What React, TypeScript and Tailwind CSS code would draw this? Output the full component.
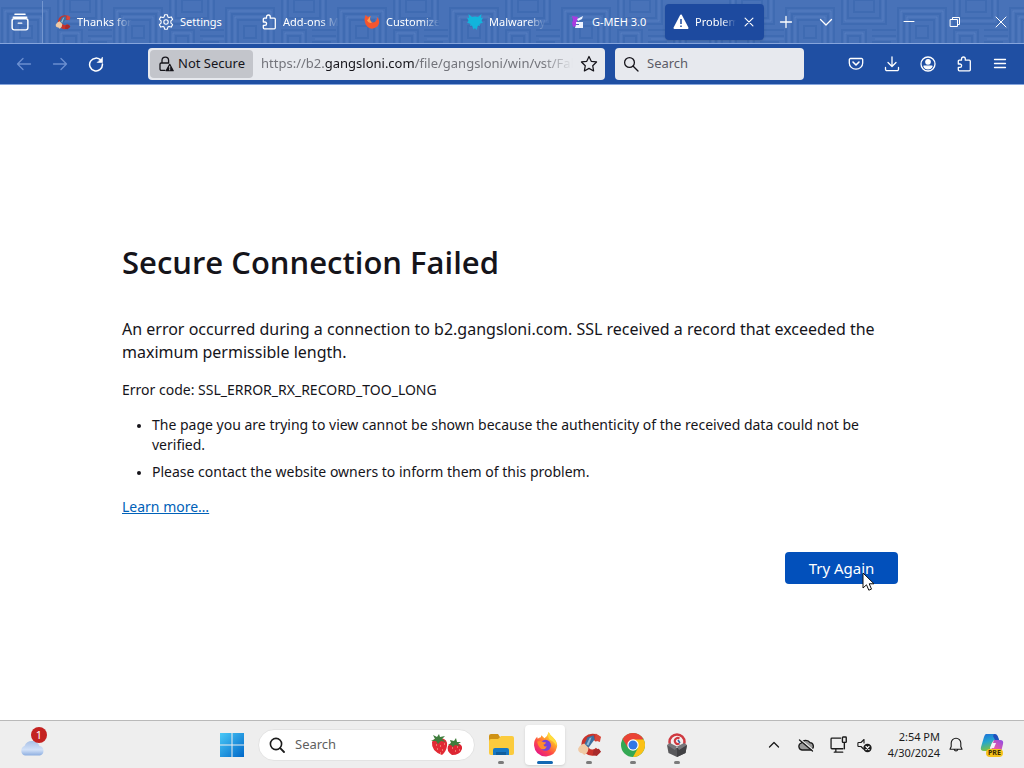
import { type ReactNode } from 'react';

interface IconProps {
    className?: string;
    size?: number;
    children: ReactNode;
}

// 16x16 line icon used all over the browser chrome
function LineIcon({ className = '', size = 16, children }: IconProps) {
    return (
        <svg
            className={`shrink-0 ${className}`}
            width={size}
            height={size}
            viewBox="0 0 16 16"
            fill="none"
            stroke="currentColor"
            strokeWidth="1.3"
            strokeLinecap="round"
            strokeLinejoin="round"
            aria-hidden="true"
        >
            {children}
        </svg>
    );
}

function PuzzleIcon() {
    return (
        <LineIcon>
            <path d="M5.5 4.2V2.900a1.900 1.900 0 0 1 3.800 0V4.200h4a1 1 0 0 1 1 1v8.600a1 1 0 0 1-1 1H3.300a1 1 0 0 1-1-1v-2.400h1.600a1.700 1.700 0 0 0 0-3.400H2.300V5.200a1 1 0 0 1 1-1z" />
        </LineIcon>
    );
}

function GearIcon() {
    return (
        <LineIcon>
            <circle cx="8" cy="8" r="2.2" strokeWidth="1.1" />
            <path
                d="M6.600.8h2.800l.5 2.200 1.100.6 2.200-.7 1.400 2.400-1.700 1.600v2.200l1.700 1.600-1.400 2.400-2.200-.7-1.100.6-.5 2.200H6.600l-.5-2.200-1.100-.6-2.200.7-1.400-2.400 1.700-1.600V6.900L1.400 5.300l1.400-2.400 2.200.7L6.100 3z"
                strokeWidth="1.1"
            />
        </LineIcon>
    );
}

function CCleanerIcon({ size = 16 }: { size?: number }) {
    return (
        <svg className="shrink-0" width={size} height={size} viewBox="0 0 24 24" aria-hidden="true">
            <path d="M20.500 7.500A7.500 7.500 0 1 0 20.500 17" fill="none" stroke="#c8332b" strokeWidth="6" />
            <path d="M18 1.500l5 3-1 5-5-1.500z" fill="#d8473a" />
            <path d="M10 5l6-2 1 4-6 8-4-3z" fill="#3d6f9e" />
            <path d="M12 6l2-1-3 8-2-1z" fill="#8db8d8" />
            <path d="M1 16q2-4 6-5l4 4q0 5-4 7-2-2-4-2-2-1-2-4z" fill="#f0c9a4" />
            <path d="M16 17l5-1 2 3-4 4-4-1z" fill="#a82a2a" />
        </svg>
    );
}

function EmberIcon() {
    return (
        <svg className="shrink-0" width="16" height="16" viewBox="0 0 16 16" aria-hidden="true">
            <path d="M.5 5L1.500 1 4 3 6.500 2Q5 6.500 8 8.500q4.500.5 5.500-5.500Q17 8 13.500 12.200 8.500 16.500 4 13.300.5 10 .5 5z" fill="#f4552f" />
            <path d="M6.500 2Q5 6.500 8 8.500q-3 1.500-5-2z" fill="#ff9a4d" />
        </svg>
    );
}

function MalwarebytesIcon() {
    return (
        <svg className="shrink-0" width="16" height="16" viewBox="0 0 16 16" fill="#12b4dc" aria-hidden="true">
            <path d="M1.500 0L5 3Q8 2 11 3l3.500-3L14 4l2-.5L14.500 7 16 8.500 12.500 10l.5 2-2-.5L9.500 16 8 14l-1.500 1.500L5 11.500 3 12l.5-2L0 8.500 1.500 7 0 3.500 2 4z" />
        </svg>
    );
}

function MehIcon() {
    return (
        <svg className="shrink-0" width="16" height="16" viewBox="0 0 16 16" aria-hidden="true">
            <path d="M2 2l6 1-2 9-3 1-1-4 1-3z" fill="#a93be0" />
            <path d="M7 5l6-3-1 3-4 2zM6 8h7v6H5l1-3h3V10H6z" fill="#eef3ff" />
        </svg>
    );
}

function WarningIcon() {
    return (
        <svg className="shrink-0" width="16" height="16" viewBox="0 0 16 16" aria-hidden="true">
            <path d="M8 1.500l6.500 12.500h-13z" fill="#fff" stroke="#fff" strokeWidth="2" strokeLinejoin="round" />
            <path d="M8 5v5M8 11.500v1.500" stroke="#1d4a9f" strokeWidth="1.500" />
        </svg>
    );
}

function ThemePattern() {
    return (
        <svg className="absolute inset-0 h-full w-full" aria-hidden="true">
            <defs>
                <pattern id="theme" width="112" height="74" patternUnits="userSpaceOnUse">
                    <g fill="none" stroke="#305fa8" strokeOpacity=".38" strokeWidth="2">
                        <path d="M2 8h48v48H2zM8 14h36v36H8zM14 20h24v24H14zM20 26h12v12H20z" />
                        <path d="M58-12h44v36H58zM64-6h32v24H64zM70 0h20v12H70z" />
                        <path d="M58 30h24v24H58zM64 36h12v12H64zM88 30h24M88 36h24M88 42h18v32M94 48v26M100 48v26" />
                        <path d="M58 60h24v14M64 66h12v8M2 62h48M2 68h48" />
                    </g>
                    <g fill="none" stroke="#7ca0dc" strokeOpacity=".22" strokeWidth="1">
                        <path d="M5 11h42v42H5zM11 17h30v30H11zM61-9h38v30H61zM61 33h18v18H61zM91 39h24v35" />
                    </g>
                </pattern>
            </defs>
            <rect width="100%" height="100%" fill="url(#theme)" />
        </svg>
    );
}

const tabs = [
    { title: 'Thanks for', icon: <CCleanerIcon />, clipped: true },
    { title: 'Settings', icon: <GearIcon /> },
    { title: 'Add-ons M', icon: <PuzzleIcon />, clipped: true },
    { title: 'Customize', icon: <EmberIcon />, clipped: true },
    { title: 'Malwareby', icon: <MalwarebytesIcon />, clipped: true },
    { title: 'G-MEH 3.0', icon: <MehIcon /> },
];

const tabTitle = 'whitespace-nowrap text-left';
const fade = '[mask-image:linear-gradient(to_right,black_65%,transparent)]';

function TabBar() {
    return (
        <header className="relative h-11 border-b border-[#86a5dc] bg-[#4872b8] text-[11px] text-white">
            <ThemePattern />
            <div className="relative flex h-full items-center pt-px">
                <button className="flex h-full w-[43px] shrink-0 items-center justify-center border-r border-[#7496cf] pr-0.5" aria-label="Firefox View">
                    <LineIcon size={18}>
                        <path d="M3.500 1.200h9M2 3.700h12" />
                        <rect x="1" y="5.200" width="14" height="9.800" rx="1.800" />
                        <path d="M6.500 9h3" />
                    </LineIcon>
                </button>
                {tabs.map((tab) => (
                    <button key={tab.title} className="flex h-9 w-[103px] min-w-0 items-center gap-1.5 pl-3 pr-3">
                        {tab.icon}
                        <span className={`${tabTitle} ${tab.clipped ? fade : ''}`}>{tab.title}</span>
                    </button>
                ))}
                <div className="ml-1 flex h-9 w-[99px] items-center gap-1.5 rounded bg-[#1d4a9f] px-2 shadow">
                    <WarningIcon />
                    <button className={`${tabTitle} ${fade} min-w-0 flex-1`}>Problem</button>
                    <button className="shrink-0" aria-label="Close tab">
                        <LineIcon size={14}>
                            <path d="M3.500 3.500l9 9M12.500 3.500l-9 9" />
                        </LineIcon>
                    </button>
                </div>
                <button className="ml-1 flex w-9 justify-center" aria-label="New tab">
                    <LineIcon><path d="M8 2.500v11M2.500 8h11" /></LineIcon>
                </button>
                <button className="ml-1 flex w-9 justify-center" aria-label="List all tabs">
                    <LineIcon><path d="M2.500 5.500L8 11l5.500-5.500" /></LineIcon>
                </button>
                <div className="ml-auto flex">
                    <button className="flex w-[46px] justify-center" aria-label="Minimize">
                        <LineIcon><path d="M3 7.500h10" strokeWidth="1" /></LineIcon>
                    </button>
                    <button className="flex w-[46px] justify-center" aria-label="Restore">
                        <LineIcon>
                            <path d="M3.500 5.500h7v7h-7zM5.500 5.500v-2h7v7h-2" strokeWidth="1" />
                        </LineIcon>
                    </button>
                    <button className="flex w-[46px] justify-center" aria-label="Close">
                        <LineIcon><path d="M3 3l10 10M13 3L3 13" strokeWidth="1" /></LineIcon>
                    </button>
                </div>
            </div>
        </header>
    );
}

const navButton = 'flex h-8 w-8 shrink-0 items-center justify-center';

function Toolbar() {
    return (
        <nav className="flex h-[41px] items-center border-b border-[#86a5dc] bg-[#1f4fa3] px-2 text-white">
            <div className="flex gap-1">
                <button className={`${navButton} text-[#6b8fd0]`} aria-label="Back" disabled>
                    <LineIcon><path d="M14.500 8H1.500M7 2.500L1.500 8 7 13.500" /></LineIcon>
                </button>
                <button className={`${navButton} text-[#6b8fd0]`} aria-label="Forward" disabled>
                    <LineIcon><path d="M1.500 8h13M9 2.500L14.500 8 9 13.500" /></LineIcon>
                </button>
                <button className={navButton} aria-label="Reload">
                    <LineIcon>
                        <path d="M13 4.500A6.400 6.400 0 1 0 14.400 8" strokeWidth="1.500" />
                        <path d="M14.500 1.500v5h-5z" fill="currentColor" strokeWidth=".6" />
                    </LineIcon>
                </button>
            </div>
            <div className="ml-9 flex h-8 min-w-0 flex-1 items-center rounded bg-[#e7e9ee] pl-0.5 text-[13px] text-[#15141a]">
                <button className="flex h-7 shrink-0 items-center gap-1 rounded bg-[#c3c5cb] px-2">
                    <LineIcon>
                        <path d="M4 7V4.500a3.300 3.300 0 0 1 6.600 0V7M7 14.300H3.200A1.200 1.200 0 0 1 2 13.100V8.200A1.200 1.200 0 0 1 3.200 7h7.500" />
                        <path d="M11.700 8.400l3.500 6.300H8.200z" fill="currentColor" />
                        <path d="M11.700 10.300v1.900M11.700 13v.9" stroke="#c3c5cb" strokeWidth="1" />
                    </LineIcon>
                    Not Secure
                </button>
                <div className="ml-2 min-w-0 flex-1 whitespace-nowrap text-[#73747b] [mask-image:linear-gradient(to_right,black_90%,transparent)]">
                    https://b2.<span className="text-[#15141a]">gangsloni.com</span>/file/gangsloni/win/vst/Fab
                </div>
                <button className="flex w-8 shrink-0 justify-center" aria-label="Bookmark this page">
                    <LineIcon size={18}>
                        <path d="M8 1.300l2 4.300 4.700.6-3.400 3.300.8 4.700L8 11.900l-4.100 2.300.8-4.700L1.300 6.200l4.700-.6z" strokeWidth="1.1" />
                    </LineIcon>
                </button>
            </div>
            <label className="ml-2.5 flex h-8 w-[189px] shrink-0 items-center gap-2 rounded bg-[#e7e9ee] px-2 text-[#15141a]">
                <LineIcon>
                    <circle cx="6.500" cy="6.500" r="4.900" />
                    <path d="M10.200 10.200l4.800 4.800" />
                </LineIcon>
                <input type="text" placeholder="Search" aria-label="Search" className="w-full min-w-0 bg-transparent text-[13px] outline-none placeholder:text-[#5b5b66]" />
            </label>
            <div className="ml-9 flex gap-1">
                <button className={navButton} aria-label="Save to Pocket">
                    <LineIcon>
                        <path d="M2.500 2.500h11a1.200 1.200 0 0 1 1.200 1.200V7a6.700 6.200 0 0 1-13.400 0V3.700a1.200 1.200 0 0 1 1.200-1.200z" />
                        <path d="M5 6l3 3 3-3" strokeWidth="1.600" />
                    </LineIcon>
                </button>
                <button className={navButton} aria-label="Downloads">
                    <LineIcon><path d="M8 .8v9.500M4 6.500l4 4 4-4M1.500 11.500v1.800A1.400 1.400 0 0 0 2.900 14.700h10.200a1.400 1.400 0 0 0 1.400-1.400v-1.800" /></LineIcon>
                </button>
                <button className={navButton} aria-label="Account">
                    <LineIcon>
                        <circle cx="8" cy="8" r="7" />
                        <circle cx="8" cy="5.800" r="2.200" fill="currentColor" />
                        <path d="M4 10.200h8q-1 2.600-4 2.600t-4-2.600z" fill="currentColor" />
                    </LineIcon>
                </button>
                <button className={navButton} aria-label="Extensions">
                    <PuzzleIcon />
                </button>
                <button className={navButton} aria-label="Menu">
                    <LineIcon><path d="M2.500 3.500h11M2.500 7.500h11M2.500 11.500h11" /></LineIcon>
                </button>
            </div>
        </nav>
    );
}

function ErrorPage() {
    return (
        <main className="flex flex-1 flex-col justify-center bg-white pl-[122px] pr-[126px] pt-[18px] text-[#15141a]">
            <h1 className="font-['Open_Sans',sans-serif] text-[31px] font-semibold leading-[46px]">Secure Connection Failed</h1>
            <p className="mt-[33px] text-base leading-[23px]">
                An error occurred during a connection to b2.gangsloni.com. SSL received a record that exceeded the maximum permissible length.
            </p>
            <p className="mt-4 text-sm leading-5">Error code: SSL_ERROR_RX_RECORD_TOO_LONG</p>
            <ul className="mt-[15px] list-disc space-y-[7px] pl-[30px] text-sm leading-5 marker:text-xs">
                <li>The page you are trying to view cannot be shown because the authenticity of the received data could not be verified.</li>
                <li>Please contact the website owners to inform them of this problem.</li>
            </ul>
            <p className="mt-[15px] text-sm leading-5">
                <a href="#" className="text-[#0061b8] underline">Learn more…</a>
            </p>
            <div className="relative mt-[35px] self-end">
                <button className="block h-8 w-[113px] rounded bg-[#0250bb] text-[15px] text-white">Try Again</button>
                <svg className="absolute left-[77px] top-5" width="14" height="20" viewBox="0 0 14 20" aria-hidden="true">
                    <path d="M1 1v15l3.500-3.200 2.300 5.400 2.700-1.100-2.300-5.300H12z" fill="#fff" stroke="#111" strokeLinejoin="round" />
                </svg>
            </div>
        </main>
    );
}

function FolderIcon() {
    return (
        <svg width="25" height="24" viewBox="0 0 25 24" aria-hidden="true">
            <path d="M0 3a2 2 0 0 1 2-2h7l2 3v4H0z" fill="#cf9215" />
            <path d="M0 8q0-2 2-2h7l3-3h11q2 0 2 2v15q0 2-2 2H2q-2 0-2-2z" fill="#fbcb3d" />
            <path d="M4 22v-5q0-2 2-2h12q2 0 2 2v5z" fill="#1678c4" />
            <path d="M7 22v-3h10v3z" fill="#105e9e" />
        </svg>
    );
}

function FirefoxIcon() {
    return (
        <svg width="25" height="25" viewBox="0 0 24 24" aria-hidden="true">
            <defs>
                <linearGradient id="fx" x1=".9" y1=".05" x2=".2" y2=".95">
                    <stop offset="0" stopColor="#fff14f" />
                    <stop offset=".35" stopColor="#ffa52b" />
                    <stop offset=".65" stopColor="#ff4b45" />
                    <stop offset="1" stopColor="#e4158a" />
                </linearGradient>
            </defs>
            <path d="M15 0q1 2.500 4 5 5 4.500 4 9.500Q21.500 23 12.500 23.500 2 23 1 13 .8 7.500 4 4.500l.5 2Q6 5 7.500 5L8 3l3 3q3-2 4-6z" fill="url(#fx)" />
            <circle cx="12" cy="12.800" r="5.300" fill="#7542d8" />
            <path d="M4 9q4-1 5.500.5 1.500.5 3 .3-.5 2-2.500 2.400 1 2.500 3.500 1.500-2 4-5.500 2.500Q5 14.500 4 9z" fill="#ff8b2c" />
            <path d="M15 0q1 2.500 4 5 4 4 3.500 8.500Q20 9 16 7.500 13.500 4 15 0z" fill="#ffdc3d" />
        </svg>
    );
}

function ChromeIcon() {
    return (
        <svg width="24" height="24" viewBox="0 0 24 24" aria-hidden="true">
            <circle cx="12" cy="12" r="12" fill="#34a853" />
            <path d="M12 12L1.600 6A12 12 0 0 1 22.400 6z" fill="#ea4335" />
            <path d="M1.600 6L7.200 15 12 12V6z" fill="#ea4335" />
            <path d="M12 6.500h10.700A12 12 0 0 1 12 24l5-9z" fill="#fbc116" />
            <circle cx="12" cy="12" r="5.700" fill="#fff" />
            <circle cx="12" cy="12" r="4.500" fill="#2f77e6" />
        </svg>
    );
}

function UninstallerIcon() {
    return (
        <svg width="24" height="24" viewBox="0 0 24 24" aria-hidden="true">
            <circle cx="12" cy="9" r="7.500" fill="#f4eeee" stroke="#cf3940" strokeWidth="2.500" />
            <path d="M14.500 5.500a3 3 0 1 0 0 5" fill="none" stroke="#cf3940" strokeWidth="2" />
            <path d="M13 7l2 3" stroke="#2e66a5" strokeWidth="1.500" />
            <path d="M2 12l10 3 10-3-1.500 8-8.500 4-8.500-4z" fill="#58585b" />
            <path d="M12 15v9l8.500-4L22 12z" fill="#414144" />
            <path d="M2 12l3-2 7 3.500-2 3.500zM22 12l-3-2-7 3.500 2 3.500z" fill="#77777b" />
        </svg>
    );
}

function Strawberries() {
    return (
        <svg className="shrink-0" width="34" height="24" viewBox="0 0 34 24" aria-hidden="true">
            <path d="M2 9q3-5 9-4 7 1 6 8-1 6-5 9Q1 18 2 9z" fill="#e22a35" />
            <path d="M18 13q3-4 8-3 7 1 6 6-2 6-10 6-6-4-4-9z" fill="#dd2633" />
            <path d="M1 8l4-2-2-4 4 2 2-3 1 3 5-1-3 3 4 3-5-1-3 3-2-3zM18 12l3-2-1-3 4 1 2-3 1 4 4 0-3 2 2 2-5-1-2 2-2-2z" fill="#3f7d3c" />
            <path d="M6 12h1M10 13h1M14 11h1M7 16h1M12 17h1M10 20h1M22 15h1M27 14h1M25 18h1M29 17h1" stroke="#ffc2a0" />
        </svg>
    );
}

function CopilotIcon() {
    return (
        <svg width="24" height="24" viewBox="0 0 24 24" aria-hidden="true">
            <defs>
                <linearGradient id="coA" x1="0" y1="0" x2=".3" y2="1">
                    <stop offset="0" stopColor="#1b6bd8" />
                    <stop offset=".5" stopColor="#25a6cf" />
                    <stop offset="1" stopColor="#7fc341" />
                </linearGradient>
                <linearGradient id="coB" x1="1" y1="0" x2=".2" y2="1">
                    <stop offset="0" stopColor="#8d4de8" />
                    <stop offset=".6" stopColor="#e858a4" />
                    <stop offset="1" stopColor="#f59a45" />
                </linearGradient>
            </defs>
            <path d="M6 1h9q2 0 3 3l1 3h-4q-2 0-3 3l-2 6q-1 2-3 2H4q-4 0-3-4l3-10q1-3 2-3z" fill="url(#coA)" />
            <path d="M14 7h6q4 0 3 4l-2 8q-1 3-4 3H8q2-1 3-4l2-8z" fill="url(#coB)" />
            <path d="M14 1q3 0 4 3l1 3h-4l-2-4z" fill="#224fbd" />
            <path d="M12 10h4l-2 5h-4z" fill="#f4f2fb" />
        </svg>
    );
}

const apps = [
    { name: 'File Explorer', icon: <FolderIcon /> },
    { name: 'Firefox', icon: <FirefoxIcon />, active: true },
    { name: 'CCleaner', icon: <CCleanerIcon size={25} /> },
    { name: 'Chrome', icon: <ChromeIcon /> },
    { name: 'Uninstaller', icon: <UninstallerIcon /> },
];

function Taskbar() {
    return (
        <footer className="flex h-12 items-center border-t border-[#b9b9b9] bg-[#eeeeee] text-[#1b1b1b]">
            <div className="w-[212px] shrink-0 pb-1.5 pl-5">
                <button className="relative block pt-3" aria-label="Weather">
                    <svg width="25" height="17" viewBox="0 0 25 17" aria-hidden="true">
                        <defs>
                            <linearGradient id="cloud" x1="0" y1="0" x2="0" y2="1">
                                <stop offset="0" stopColor="#a9c1e6" />
                                <stop offset=".6" stopColor="#d2e1f8" />
                                <stop offset="1" stopColor="#8daee0" />
                            </linearGradient>
                        </defs>
                        <path d="M5 16.500a5 5 0 0 1-.5-9.500A8 7.500 0 0 1 19.500 7 4.900 4.900 0 0 1 20 16.500z" fill="url(#cloud)" />
                    </svg>
                    <span className="absolute left-[11px] top-0 flex h-4 w-4 items-center justify-center rounded-full bg-[#c42220] text-[11px] leading-4 text-white">1</span>
                </button>
            </div>
            <div className="flex items-center gap-1.5">
                <button className="flex w-10 justify-center" aria-label="Start">
                    <svg width="24" height="24" viewBox="0 0 24 24" aria-hidden="true">
                        <defs>
                            <linearGradient id="win" x1="0" y1="0" x2="24" y2="24" gradientUnits="userSpaceOnUse">
                                <stop offset="0" stopColor="#4ac9f7" />
                                <stop offset="1" stopColor="#0067c8" />
                            </linearGradient>
                        </defs>
                        <path d="M0 0h11.500v11.500H0zM12.500 0H24v11.500H12.500zM0 12.500h11.500V24H0zM12.500 12.500H24V24H12.500z" fill="url(#win)" />
                    </svg>
                </button>
                <label className="flex h-8 w-[217px] items-center rounded-full border border-[#e3e3e3] bg-white px-2.5">
                    <LineIcon>
                        <circle cx="7" cy="7" r="5.600" strokeWidth="1.600" />
                        <path d="M11.200 11.200l3.800 3.800" strokeWidth="1.800" />
                    </LineIcon>
                    <input type="text" placeholder="Search" aria-label="Search Windows" className="min-w-0 flex-1 bg-transparent pl-2.5 text-[13px] outline-none placeholder:text-[#5f5f5f]" />
                    <Strawberries />
                </label>
                <div className="flex gap-1">
                    {apps.map((app) => (
                        <button
                            key={app.name}
                            aria-label={app.name}
                            className={`flex h-10 w-10 flex-col items-center justify-end rounded ${app.active ? 'bg-white shadow-sm' : ''}`}
                        >
                            {app.icon}
                            <span className={`mt-1 mb-px h-[3px] rounded-full ${app.active ? 'w-4 bg-[#1268b3]' : 'w-1.5 bg-[#7b7b7b]'}`} />
                        </button>
                    ))}
                </div>
            </div>
            <div className="ml-auto flex items-center pr-5">
                <button className="w-8" aria-label="Show hidden icons">
                    <LineIcon><path d="M3.500 10L8 5.500l4.500 4.500" /></LineIcon>
                </button>
                <button className="w-8" aria-label="OneDrive">
                    <LineIcon>
                        <path d="M4 13A3.600 3.600 0 0 1 3.400 6 4.900 4.900 0 0 1 12 5.700 3.700 3.700 0 0 1 12.500 13z" fill="#9a9a9a" />
                        <path d="M2.500 2.500l12 10" stroke="#eee" strokeWidth="1.500" />
                        <path d="M1.500 3l13 11" />
                    </LineIcon>
                </button>
                <button className="w-[26px]" aria-label="Network">
                    <LineIcon size={17}>
                        <path d="M10 2H1.800A.8.800 0 0 0 1 2.800v8.400A.8.800 0 0 0 1.800 12h10.400M5.500 12v3M4 15.200h8" strokeWidth="1.200" />
                        <rect x="11.700" y="1" width="3.600" height="5" rx=".6" />
                        <path d="M13.500 6v6" />
                    </LineIcon>
                </button>
                <button className="w-6" aria-label="Volume muted">
                    <LineIcon>
                        <path d="M7.500 12L5 9.500H2.700a.8.800 0 0 1-.8-.8V6.300a.8.800 0 0 1 .8-.8H5L8 2.500V6" strokeWidth="1.100" />
                        <circle cx="11.500" cy="11" r="3.500" fill="currentColor" />
                        <path d="M10 9.500l3 3M13 9.500l-3 3" stroke="#fff" strokeWidth="1.200" />
                    </LineIcon>
                </button>
                <div className="ml-2 whitespace-nowrap text-right text-[11px] leading-4">
                    <div>2:54 PM</div>
                    <div>4/30/2024</div>
                </div>
                <button className="ml-2" aria-label="Notifications">
                    <LineIcon>
                        <path d="M8 1.200a4.800 4.800 0 0 0-4.800 4.800v3.500L2 12.300h12l-1.200-2.800V6A4.800 4.800 0 0 0 8 1.200zM6.200 12.600a1.900 1.900 0 0 0 3.600 0" strokeWidth="1.100" />
                    </LineIcon>
                </button>
                <button className="relative ml-4" aria-label="Copilot preview">
                    <CopilotIcon />
                    <span className="absolute left-1.5 top-4 rounded bg-[#f6c21c] px-0.5 text-[7px] font-bold leading-2 text-[#3a2b00]">PRE</span>
                </button>
            </div>
        </footer>
    );
}

export default function App() {
    return (
        <div className="flex min-h-screen flex-col font-['Noto_Sans','Open_Sans',sans-serif]">
            <TabBar />
            <Toolbar />
            <ErrorPage />
            <Taskbar />
        </div>
    );
}
